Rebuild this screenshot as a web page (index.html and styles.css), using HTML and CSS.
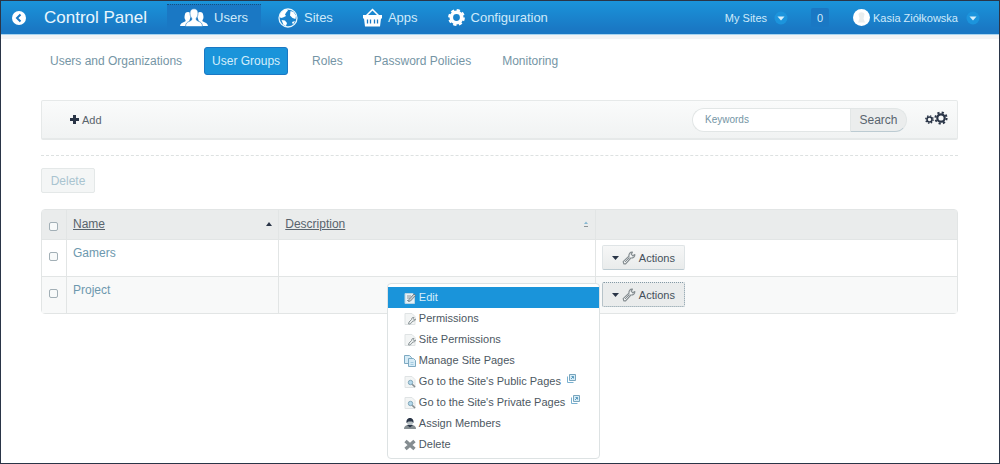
FILE: index.html
```html
<!DOCTYPE html>
<html lang="en">
<head>
<meta charset="utf-8">
<title>Control Panel - User Groups</title>
<link rel="stylesheet" href="styles.css">
</head>
<body>
<svg class="sprite" aria-hidden="true">
  <symbol id="wrench" viewBox="0 0 14 14"><path d="M1.8 12.8 1.2 10.6 7 5.2C6.6 3 8 1 10.4 1.2L9.2 3.2l1.6 1.6 2-1.2c.2 2.400-1.800 3.600-4 3.400L3.600 12.800Z" fill="#f4f6f7" stroke="#858d91" stroke-width="1.200" stroke-linejoin="round"/><path d="m3 11 4.500-4.500" stroke="#858d91"/></symbol>
  <symbol id="caret" viewBox="0 0 14 14"><circle cx="7" cy="7" r="6.500" fill="#1c94dc"/><path d="M3.500 5.500h7L7 9.500Z" fill="#d8f0fc"/></symbol>
  <symbol id="page-key" viewBox="0 0 12 12"><path d="M1 .5h7l3 3v8H1Z" fill="#f3f5f5" stroke="#dfe3e4"/><path d="m4.500 11 .5-2 2.500-2.500c0-1.500 1-2.500 2.500-2l-.8 1.300 1 1L11.500 6c0 1.600-1.300 2.200-2.500 2l-2.800 3Z" fill="#e9eded" stroke="#858d91" stroke-width=".9"/></symbol>
  <symbol id="page-view" viewBox="0 0 12 12"><path d="M1 .5h7l3 3v8H1Z" fill="#f3f5f5" stroke="#dfe3e4"/><circle cx="6.500" cy="6.500" r="2.200" fill="#b5d9ec" stroke="#80a6b9"/><path d="m8.200 8.200 2.800 2.800" stroke="#858d91" stroke-width="1.600"/></symbol>
  <symbol id="popup" viewBox="0 0 9 9"><path d="M.5 2.500v6h6" fill="none" stroke="#78b0d0"/><path d="M2.500.5h6v6h-6Z" fill="#d8edf7" stroke="#78a5bd"/><path d="M4 5l2.500-2.500M4.500 2.500h2v2" fill="none" stroke="#5c9cc0"/></symbol>
</svg>

<header class="dockbar">
  <a class="back" href="#back" aria-label="Back"><svg width="14" height="14" viewBox="0 0 14 14"><circle cx="7" cy="7" r="7" fill="#fff"/><path d="M8.500 3.500 5 7l3.500 3.500" fill="none" stroke="#1a78c4" stroke-width="2"/></svg></a>
  <a class="brand" href="#panel">Control Panel</a>
  <nav class="main-nav" aria-label="Control panel">
    <a class="active" href="#users"><svg width="28" height="20" viewBox="0 0 28 20" fill="#fff"><path d="M8 4c2 0 3 1.300 3 3.200 0 1.500-.7 2.500-1 3.500L9 14l-2 4H0c.3-2.500 2-3.200 5-4.500.8-.5.800-1.200 0-2.300C4.300 9.800 4.500 8.500 4.800 7 5 5 6 4 8 4ZM20 4c-2 0-3 1.300-3 3.200 0 1.500.7 2.500 1 3.500l1 3.300 2 4h7c-.3-2.500-2-3.200-5-4.500-.8-.5-.8-1.200 0-2.300.7-1.400.5-2.700.2-4.200C23 5 22 4 20 4Z"/><path d="M14 .8c3 0 4.300 2 4 5-.2 2.200-.8 3.200-1.700 4.400-.3 1.500 0 2 1.700 2.800 3.300 1.200 4.300 2.500 4.500 5.500h-17c.2-3 1.200-4.300 4.500-5.500 1.700-.8 2-1.300 1.700-2.800-.9-1.200-1.500-2.200-1.700-4.400-.3-3 1-5 4-5Z" stroke="#1a78c4" stroke-width=".6"/></svg><span>Users</span></a>
    <a href="#sites"><svg width="20" height="20" viewBox="0 0 20 20"><circle cx="10" cy="10" r="9" fill="#1a83ce" stroke="#e6f5fd" stroke-width="1.300"/><path d="M1.500 9C2 5 4.500 2 8.500 1.200L10 2.500 8.500 4 7 6.500 8 8 5 9.500 3 10Z" fill="#fff"/><path d="m12.500 3 3 1 2.500 3.500-.5 3.500-3-1-2.500-2.500Z" fill="#fff"/><path d="m3.500 12 3.500.5 2 2.500-1 3-2.500-1Z" fill="#fff"/><path d="m14 14 3-1-2 3.500Z" fill="#fff"/></svg><span>Sites</span></a>
    <a href="#apps"><svg width="19" height="19" viewBox="0 0 19 19"><path d="m3 8 6.500-6.500L16 8" fill="none" stroke="#fff" stroke-width="1.500"/><path d="M0 7h19v3.500h-1L17 18.500H2L1 10.500H0Z" fill="#fff"/><path d="M4.500 11.500v4M7.500 11.500v4M11.500 11.500v4M14.500 11.500v4" stroke="#1a78c4" stroke-width="1.300"/></svg><span>Apps</span></a>
    <a href="#configuration"><svg width="17" height="17" viewBox="0 0 17 17"><circle cx="8.500" cy="8.500" r="5.200" fill="none" stroke="#fff" stroke-width="3.600"/><circle cx="8.500" cy="8.500" r="7.400" fill="none" stroke="#fff" stroke-width="2" stroke-dasharray="3.300 2.511"/></svg><span>Configuration</span></a>
  </nav>
  <div class="account">
    <a class="my-sites" href="#my-sites">My Sites<svg width="14" height="14"><use href="#caret"/></svg></a>
    <a class="count" href="#notifications">0</a>
    <a class="user" href="#account"><svg width="17" height="17" viewBox="0 0 17 17"><circle cx="8.500" cy="8.500" r="8.500" fill="#fff"/><path d="M5.500 5.500c0-3 6-3 6 0l-1 4 1.500 4H5l1.500-4Z" fill="#e9eded"/></svg><span>Kasia Ziółkowska</span><svg width="14" height="14"><use href="#caret"/></svg></a>
  </div>
</header>

<main>
  <nav class="tabs" aria-label="Users">
    <a href="#organizations">Users and Organizations</a>
    <a class="selected" href="#groups">User Groups</a>
    <a href="#roles">Roles</a>
    <a href="#policies">Password Policies</a>
    <a href="#monitoring">Monitoring</a>
  </nav>

  <div class="toolbar">
    <button class="add" type="button"><svg width="9" height="9" viewBox="0 0 9 9"><path d="M4.500 0v9M0 4.500h9" stroke="#2a3547" stroke-width="3"/></svg>Add</button>
    <form class="search">
      <input type="text" placeholder="Keywords" aria-label="Keywords">
      <button type="submit">Search</button>
    </form>
    <button class="gears" type="button" aria-label="Settings"><svg width="23" height="14" viewBox="0 0 23 14" fill="none" stroke="#2a3547"><circle cx="4.500" cy="8.500" r="2.500" stroke-width="1.600"/><circle cx="4.500" cy="8.500" r="3.700" stroke-width="1.400" stroke-dasharray="1.400 1.506"/><circle cx="16" cy="7" r="3.700" stroke-width="2.200"/><circle cx="16" cy="7" r="5.600" stroke-width="2" stroke-dasharray="2.200 2.198"/></svg></button>
  </div>

  <hr>
  <button class="delete" type="button" disabled>Delete</button>

  <table class="groups">
    <colgroup><col class="col-check"><col class="col-name"><col class="col-description"><col></colgroup>
    <thead>
      <tr>
        <th><input type="checkbox" aria-label="Select all"></th>
        <th><a class="sort" href="#name"><span>Name</span><svg width="6" height="4" viewBox="0 0 6 4"><path d="M0 4h6L3 0Z" fill="#2a3547"/></svg></a></th>
        <th><a class="sort" href="#description"><span>Description</span><svg width="6" height="7" viewBox="0 0 6 7"><path d="M1 3h4L3 .5Z" fill="#86b8d2"/><path d="M1 5.500h4" stroke="#8e9496"/></svg></a></th>
        <th></th>
      </tr>
    </thead>
    <tbody>
      <tr>
        <td><input type="checkbox" aria-label="Select Gamers"></td>
        <td><a href="#gamers">Gamers</a></td>
        <td></td>
        <td><div class="actions"><button type="button"><svg width="7" height="4" viewBox="0 0 7 4"><path d="M0 0h7L3.500 4Z" fill="#2a3547"/></svg><svg width="14" height="14"><use href="#wrench"/></svg>Actions</button></div></td>
      </tr>
      <tr>
        <td><input type="checkbox" aria-label="Select Project"></td>
        <td><a href="#project">Project</a></td>
        <td></td>
        <td><div class="actions open"><button type="button" aria-expanded="true"><svg width="7" height="4" viewBox="0 0 7 4"><path d="M0 0h7L3.500 4Z" fill="#2a3547"/></svg><svg width="14" height="14"><use href="#wrench"/></svg>Actions</button>
          <ul class="menu">
            <li><a class="highlight" href="#edit"><svg width="12" height="12" viewBox="0 0 12 12"><path d="M1 1.500h8l1.500 2v8H1Z" fill="#e5f1f7" stroke="#b9d4e2"/><path d="M3 4h4M3 6h3M3 8.500h1.500" stroke="#8e9496"/><path d="m4.500 9.500.5-2 5-5.500 1.500 1.500-5 5.500Z" fill="#c8d0d3" stroke="#626d75" stroke-width=".8"/></svg>Edit</a></li>
            <li><a href="#permissions"><svg width="12" height="12"><use href="#page-key"/></svg>Permissions</a></li>
            <li><a href="#site-permissions"><svg width="12" height="12"><use href="#page-key"/></svg>Site Permissions</a></li>
            <li><a href="#pages"><svg width="12" height="12" viewBox="0 0 12 12" fill="#d6ebf6" stroke="#7eaac2"><path d="M.5.500h5l2 2v6h-7Z"/><path d="M4.500 3.500h5l2 2v6h-7Z"/><path d="M6.500 7.500h3M6.500 9.500h3" stroke="#a4cbe0"/></svg>Manage Site Pages</a></li>
            <li><a href="#public"><svg width="12" height="12"><use href="#page-view"/></svg>Go to the Site's Public Pages<svg class="popup" width="9" height="9"><use href="#popup"/></svg></a></li>
            <li><a href="#private"><svg width="12" height="12"><use href="#page-view"/></svg>Go to the Site's Private Pages<svg class="popup" width="9" height="9"><use href="#popup"/></svg></a></li>
            <li><a href="#assign"><svg width="12" height="12" viewBox="0 0 12 12"><path d="M0 11c0-2 1-3.500 3.500-4h5C11 7.500 12 9 12 11Z" fill="#858d91"/><circle cx="6" cy="4.500" r="3" fill="#b8c1c5"/><path d="M2.500 5C2 1.500 4 0 6 0s4 1.500 3.500 5L8 3.500H4.500ZM3 7l3 2.500L9 7" fill="#2a3547"/></svg>Assign Members</a></li>
            <li><a href="#delete"><svg width="12" height="12" viewBox="0 0 12 12"><path d="m1.500 2 9 8M10.500 2l-9 8" stroke="#858d91" stroke-width="3.400"/></svg>Delete</a></li>
          </ul></div></td>
      </tr>
    </tbody>
  </table>
</main>
</body>
</html>
```

FILE: styles.css
```css
* { box-sizing: border-box; }

body {
  margin: 0;
  min-height: 100vh;
  border: 1px solid #2a3547;
  background: #fff;
  color: #59646d;
  font-family: "Liberation Sans", Arial, sans-serif;
  font-size: 12px;
  line-height: 16px;
}

a { color: inherit; text-decoration: none; }
svg { display: block; flex: none; }
button, input { font: inherit; color: inherit; }
button { cursor: pointer; }
.sprite { position: absolute; width: 0; height: 0; }

.dockbar {
  display: flex;
  align-items: stretch;
  height: 34px;
  padding: 0 19px 0 11px;
  border-bottom: 1px solid #a8d4ef;
  background: linear-gradient(#1a94da, #1a78c4 85%);
  box-shadow: 0 4px 0 #f3f4f5;
  color: #cfeafa;
}
.dockbar a { display: flex; align-items: center; }
.brand {
  margin: 0 20px 0 18px;
  font-size: 17px;
  color: #e9f6fd;
}
.main-nav { display: flex; gap: 4px; margin-top: 3px; font-size: 13px; }
.main-nav a { gap: 6px; padding: 0 13px 3px; }
.main-nav .active { background: #1a78c4; border-top: 1px dotted #155080; }
.account { display: flex; align-items: center; margin-left: auto; font-size: 11px; }
.my-sites { gap: 7px; }
.count {
  justify-content: center;
  width: 18px;
  height: 19px;
  margin: 0 24px 0 23px;
  border-radius: 2px;
  background: #1a78c4;
}
.user span { margin: 0 8px 0 3px; }

main { padding: 12px 41px 4px 40px; }

.tabs { display: flex; gap: 13px; color: #7595a5; }
.tabs a { padding: 5px 8px; border: 1px solid transparent; border-radius: 3px; }
.tabs .selected {
  margin-right: 2px;
  padding: 5px 7px;
  border-color: #1a78c4;
  background: #1a94da;
  color: #d5eefb;
}

.toolbar {
  display: flex;
  align-items: center;
  height: 40px;
  margin-top: 25px;
  padding: 0 9px 0 28px;
  border: 1px solid #e6e9e9;
  border-bottom-width: 2px;
  border-radius: 2px;
  background: linear-gradient(#fafbfb, #f1f3f3);
}
.toolbar button { border: 0; background: none; padding: 0; }
.toolbar .add { display: flex; align-items: center; gap: 3px; font-size: 11px; }
.search { display: flex; width: 215px; height: 24px; margin-left: auto; }
.search input {
  flex: 1;
  min-width: 0;
  padding: 0 12px;
  border: 1px solid #e2e6e6;
  border-right: 0;
  border-radius: 12px 0 0 12px;
  background: #fff;
  font-size: 10px;
}
.search input::placeholder { color: #7595a5; opacity: 1; }
.toolbar .search button {
  width: 57px;
  border: 1px solid #e2e6e6;
  border-bottom-color: #bccbd2;
  border-radius: 0 12px 12px 0;
  background: #ebeded;
}
.toolbar .gears { margin: 0 0 4px 18px; }

hr { margin: 15px 0 12px; border: 0; border-top: 1px dashed #dde1e1; }

.delete {
  display: block;
  width: 54px;
  height: 25px;
  padding: 0;
  border: 1px solid #e4e8e8;
  border-radius: 2px;
  background: #f4f6f6;
  color: #a9c4d0;
}

.groups {
  width: 100%;
  margin-top: 16px;
  border: 1px solid #e2e5e5;
  border-radius: 4px;
  border-spacing: 0;
  table-layout: fixed;
}
.col-check { width: 24px; }
.col-name { width: 23.2%; }
.col-description { width: 34.6%; }
.groups th, .groups td {
  height: 37px;
  padding: 5px 6px;
  border-left: 1px solid #e2e5e5;
  text-align: left;
  vertical-align: top;
  font-weight: normal;
}
.groups th:first-child, .groups td:first-child { border-left: 0; padding: 10px 0 0 7px; }
.groups th { height: 29px; padding-top: 6px; background: #eaecec; }
.groups td { border-top: 1px solid #e2e5e5; }
.groups tbody tr:last-child { background: #f8f9f9; }
.groups td > a { color: #6d98ae; }
.sort { display: flex; align-items: center; justify-content: space-between; }
.sort span { text-decoration: underline; }
.groups input {
  display: block;
  appearance: none;
  width: 9px;
  height: 9px;
  margin: 2px 0 0;
  border: 1px solid #a2afb6;
  border-radius: 2px;
  background: #f8fafa;
}

.actions { position: relative; width: 83px; }
.actions button {
  display: flex;
  align-items: center;
  gap: 3px;
  width: 83px;
  height: 25px;
  padding: 0 0 0 9px;
  border: 1px solid #dfe4e6;
  border-bottom-color: #bccbd2;
  border-radius: 2px;
  background: linear-gradient(#f6f7f7, #e9ebeb);
  color: #44505b;
  font-size: 11px;
}
.actions.open button { border: 1px dotted #8399a5; background: #eaecec; }

.menu {
  position: absolute;
  top: 1px;
  right: 100%;
  width: 213px;
  margin: 0 2px 0 0;
  padding: 3px 0;
  border: 1px solid #dde2e3;
  border-radius: 4px;
  background: #fff;
  color: #4d5862;
  font-size: 11px;
  line-height: 21px;
  list-style: none;
}
.menu a { display: flex; align-items: center; gap: 3px; padding-left: 16px; }
.menu .highlight { background: #1a94da; color: #d5eefb; }
.menu .popup { margin: 0 0 6px 3px; }
```
